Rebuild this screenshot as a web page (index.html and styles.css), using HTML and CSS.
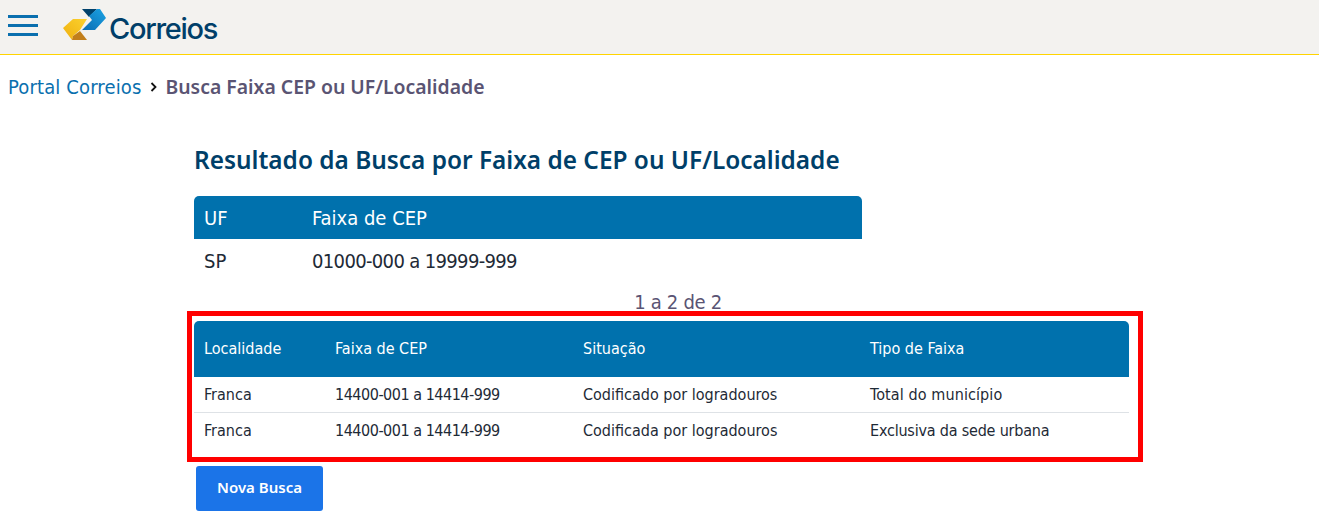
FILE: index.html
```html
<!DOCTYPE html>
<html lang="pt-BR">
<head>
<meta charset="utf-8">
<title>Busca Faixa CEP</title>
<link rel="stylesheet" href="styles.css">
</head>
<body>
<header class="topbar">
  <button class="menu" aria-label="Menu"><span></span><span></span><span></span></button>
  <a class="logo" href="#">
    <svg class="logo-mark" width="50" height="35" viewBox="60 7 50 35" aria-hidden="true">
      <defs>
        <linearGradient id="blue" x1="0" y1="1" x2="1" y2="0"><stop offset="0" stop-color="#0a6cb2"/><stop offset="1" stop-color="#1ba3e4"/></linearGradient>
        <linearGradient id="yellow" x1="0" y1="1" x2="1" y2="0"><stop offset="0" stop-color="#efb00f"/><stop offset="1" stop-color="#fbd12e"/></linearGradient>
      </defs>
      <path d="M82 9H97L89 17Z" fill="#00416b"/>
      <path d="M97 9 100 9 106 18 95 30H82L92 20 89 16Z" fill="url(#blue)"/>
      <path d="M63 28 73 19H87L80 30 73 36 72 40Z" fill="url(#yellow)"/>
      <path d="M80 31 87 40H72L73 36Z" fill="#c27f1a"/>
    </svg>
    <span class="logo-text">Correios</span>
  </a>
</header>
<nav class="crumbs">
  <a href="#">Portal Correios</a>
  <svg class="chev" width="8" height="10" viewBox="0 0 8 10" aria-hidden="true"><path d="M1.500 1 5.500 5 1.500 9" fill="none" stroke="#111" stroke-width="1.800"/></svg>
  <strong>Busca Faixa CEP ou UF/Localidade</strong>
</nav>
<main class="content">
  <h1>Resultado da Busca por Faixa de CEP ou UF/Localidade</h1>
  <table class="uf">
    <thead><tr><th class="c-uf">UF</th><th>Faixa de CEP</th></tr></thead>
    <tbody><tr><td>SP</td><td class="num">01000-000 a 19999-999</td></tr></tbody>
  </table>
  <p class="count">1 a 2 de 2</p>
  <div class="highlight">
    <table class="res">
      <thead><tr><th class="c1">Localidade</th><th class="c2">Faixa de CEP</th><th class="c3">Situação</th><th>Tipo de Faixa</th></tr></thead>
      <tbody>
        <tr><td>Franca</td><td class="num">14400-001 a 14414-999</td><td>Codificado por logradouros</td><td class="wide">Total do município</td></tr>
        <tr><td>Franca</td><td class="num">14400-001 a 14414-999</td><td>Codificada por logradouros</td><td class="tight">Exclusiva da sede urbana</td></tr>
      </tbody>
    </table>
  </div>
  <button class="btn">Nova Busca</button>
</main>
</body>
</html>
```
FILE: styles.css
```css
* { box-sizing: border-box; }
html, body { margin: 0; padding: 0; }
body {
  background: #fff;
  color: #1e2a36;
  font-family: "DejaVu Sans Condensed", "DejaVu Sans", sans-serif;
  height: 532px;
  overflow: hidden;
}
.topbar {
  height: 55px;
  background: #f3f2ef;
  border-bottom: 1px solid #ffd400;
  display: flex;
  align-items: flex-start;
}
.menu {
  width: 30px;
  margin: 15px 0 0 8px;
  padding: 0;
  border: 0;
  background: none;
  display: flex;
  flex-direction: column;
  gap: 6px;
}
.menu span { display: block; height: 3px; background: #0a6fae; }
.logo {
  display: flex;
  align-items: flex-start;
  margin-left: 22px;
  text-decoration: none;
}
.logo-mark { margin-top: 7px; }
.logo-text {
  margin: 13px 0 0 -1px;
  font-family: Inter, sans-serif;
  font-size: 29px;
  line-height: 32px;
  font-weight: 500;
  letter-spacing: -1.3px;
  color: #003f69;
}
.crumbs {
  display: flex;
  align-items: center;
  height: 24px;
  margin: 20px 0 0 8px;
  font-size: 20px;
  line-height: 24px;
}
.crumbs a { color: #0a6fae; text-decoration: none; letter-spacing: .14px; }
.chev { margin: 0 7px 0 9px; }
.crumbs strong {
  color: #5a5473;
  font-family: "Noto Sans", sans-serif;
  font-weight: 600;
  font-size: 19.4px;
}
.content { padding-left: 194px; width: 1129px; }
h1 {
  margin: 45px 0 0;
  font-family: "Noto Sans", sans-serif;
  font-size: 24.4px;
  line-height: 32px;
  font-weight: 600;
  color: #003f69;
}
table { border-collapse: collapse; border-spacing: 0; }
th { text-align: left; font-weight: 400; color: #fff; background: #0071ad; padding: 0 0 0 10px; }
td { padding: 0 0 0 10px; }
th:first-child { border-top-left-radius: 5px; }
th:last-child { border-top-right-radius: 5px; }
.uf { width: 668px; margin-top: 20px; font-size: 20px; }
.uf th { height: 43px; }
.uf td { height: 44px; }
.uf .num { letter-spacing: -.65px; }
.res .num { letter-spacing: -.48px; }
.res .wide { letter-spacing: .1px; }
.res .tight { letter-spacing: -.2px; }
.c-uf { width: 108px; }
.count { margin: 7px 0 0; padding-left: 33px; text-align: center; font-size: 20px; line-height: 24px; letter-spacing: -.3px; color: #5a5473; }
.highlight {
  width: 956px;
  margin: -3px 0 0 -7px;
  padding: 5px 9px 9px 2px;
  border: 5px solid #f00;
}
.res { width: 935px; font-size: 16px; }
.res th { height: 56px; padding-bottom: 2px; }
.res td { height: 36px; }
.res tbody tr:first-child td { height: 35px; border-bottom: 1px solid #dee2e6; }
.c1 { width: 131px; }
.c2 { width: 248px; }
.c3 { width: 287px; }
.btn {
  display: block;
  width: 127px;
  height: 45px;
  margin: 4px 0 0 2px;
  padding: 0 0 3px;
  border: 0;
  border-radius: 3px;
  background: #1b74e8;
  color: #fff;
  font: 600 15px "Noto Sans", sans-serif;
}
```
